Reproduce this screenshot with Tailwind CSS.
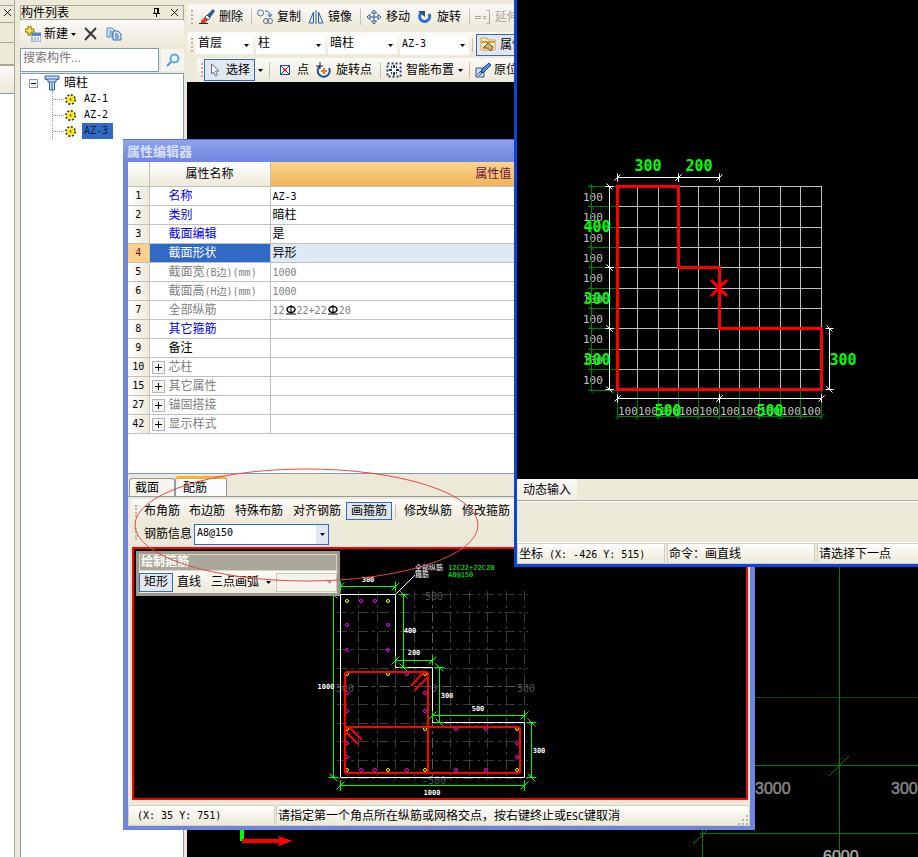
<!DOCTYPE html>
<html lang="zh-CN">
<head>
  <meta charset="UTF-8" />
  <meta name="viewport" content="width=device-width, initial-scale=1" />
  <title>属性编辑器</title>
  <script src="https://cdn.jsdelivr.net/npm/@tailwindcss/browser@4"></script>
  <style>
    body {
      font-family: 'Liberation Sans', 'Noto Sans CJK SC', sans-serif;
      font-size: 12px;
      line-height: 16px;
    }
    .mono {
      font-family: 'DejaVu Sans Mono', 'Noto Sans CJK SC', monospace;
      font-size: 10px;
    }
    td span.mono { line-height: 1; }
    button, select, label, span, footer div { white-space: nowrap; }
  </style>
</head>
<body class="relative min-h-screen overflow-hidden bg-[#ece9d8] text-black">

  <!-- Main application -->
  <div class="flex min-h-screen">

    <!-- Docked panel, mostly off screen -->
    <aside class="flex w-[15px] shrink-0 flex-col border-r border-[#aca899] pt-[5px]">
      <button class="flex h-[14px] items-center justify-center border-t border-[#aca899] bg-[#ece9d8]" aria-label="关闭">
        <svg class="size-[9px]" viewBox="0 0 9 9"><path d="M1 1l7 7M8 1l-7 7" stroke="#222" fill="none"/></svg>
      </button>
      <div class="mt-[3px] h-[21px] border-y border-[#aca899]"></div>
      <div class="h-[23px] border-b-2 border-[#aca899]"></div>
      <div class="h-[27px] bg-gradient-to-b from-[#fbfaf7] to-[#ece9d8]"></div>
      <div class="grow border-t border-[#7f9db9] bg-white"></div>
    </aside>

    <!-- Component list -->
    <aside class="ml-[5px] flex w-[164px] shrink-0 flex-col pt-[5px]">
      <header class="flex h-[15px] items-center border border-[#aca899] pr-1">
        <h2 class="grow">构件列表</h2>
        <button class="mr-[9px]" aria-label="固定">
          <svg class="size-[9px]" viewBox="0 0 9 9"><path d="M2 .5h5M2.500 .5v5M5.500 .5v5M6.500 .5v5M1 5.500h7M4.500 6v3" stroke="#000" fill="none"/></svg>
        </button>
        <button aria-label="关闭">
          <svg class="size-[9px]" viewBox="0 0 9 9"><path d="M1 1l7 7M8 1l-7 7" stroke="#222" fill="none"/></svg>
        </button>
      </header>
      <div class="flex h-[28px] items-center rounded-sm bg-gradient-to-b from-[#fbfaf7] to-[#ece9d8] pl-[5px]">
        <button class="flex items-center gap-[3px]">
          <svg class="size-4" viewBox="0 0 16 16"><path d="M3 0h3v3h3v3H6v3H3V6H0V3h3z" fill="#ffe14d" stroke="#8a6d00"/><path d="M7 7h9v9H7z" fill="#f4f8ff" stroke="#5c86c5"/><path d="M7 7h9v3H7z" fill="#5c86c5"/><path d="M9 12h2M12 12h2M9 14h2M12 14h2" stroke="#5c86c5"/></svg>
          新建
          <svg class="h-[3px] w-[5px]" viewBox="0 0 5 3"><path d="M0 0h5L2.500 3z"/></svg>
        </button>
        <button class="ml-[8px]" aria-label="删除">
          <svg class="size-[14px]" viewBox="0 0 14 14"><path d="M1 1l11 11M12 1L1 13" stroke="#3a3a3a" stroke-width="2" fill="none"/></svg>
        </button>
        <button class="ml-[8px]" aria-label="复制">
          <svg class="size-4" viewBox="0 0 16 16"><path d="M1 2h5l3 3v6H1z" fill="#dce9fb" stroke="#4f81c7"/><path d="M3 5h3M3 7h4M3 9h4" stroke="#4f81c7"/><path d="M7 5h5l3 3v6H7z" fill="#dce9fb" stroke="#3569b5"/><path d="M9 8h3M9 10h4M9 12h4" stroke="#3569b5"/></svg>
        </button>
      </div>
      <div class="flex h-[24px] items-center gap-[2px]">
        <input type="text" placeholder="搜索构件..." aria-label="搜索构件" class="h-[24px] w-[139px] border border-[#7f9db9] bg-white px-[2px] pb-1 placeholder:text-[#777]" />
        <button class="flex h-[22px] grow items-center justify-center bg-[#f5f4ee]" aria-label="搜索">
          <svg class="size-[14px]" viewBox="0 0 14 14"><circle cx="8.500" cy="5.500" r="4" fill="#eef7ff" stroke="#5ba7e6" stroke-width="2"/><path d="M5 9l-4 4" stroke="#4b93d6" stroke-width="2"/></svg>
        </button>
      </div>
      <div class="mt-px grow border border-b-0 border-[#7f9db9] bg-white pt-px pl-[8px]">
        <div class="flex h-[16px] items-center">
          <svg class="size-[9px]" viewBox="0 0 9 9"><rect x=".5" y=".5" width="8" height="8" fill="#f3f1e9" stroke="#7f9db9"/><path d="M2 4.500h5" stroke="#000"/></svg>
          <svg class="ml-[6px] size-4" viewBox="0 0 16 16"><path d="M1 1h14v3l-3 1v2h-1.500v8h-5V7H4V5L1 4z" fill="#cfe0fb" stroke="#2c5fb3"/><path d="M1 4h14M5 7h6M8 8v7" stroke="#2c5fb3"/></svg>
          <span class="ml-1">暗柱</span>
        </div>
        <ul class="ml-[23px] border-l border-dotted border-[#999]">
          <li class="flex h-[16px] items-center"><i class="w-[11px] border-t border-dotted border-[#999]"></i><svg class="ml-px size-[11px]" viewBox="0 0 11 11"><use href="#gear"/></svg><span class="mono ml-[6px] px-[2px]">AZ-1</span></li>
          <li class="flex h-[16px] items-center"><i class="w-[11px] border-t border-dotted border-[#999]"></i><svg class="ml-px size-[11px]" viewBox="0 0 11 11"><use href="#gear"/></svg><span class="mono ml-[6px] px-[2px]">AZ-2</span></li>
          <li class="flex h-[16px] items-center"><i class="w-[11px] border-t border-dotted border-[#999]"></i><svg class="ml-px size-[11px]" viewBox="0 0 11 11"><use href="#gear"/></svg><span class="mono ml-[6px] bg-[#316ac5] pr-[5px] pl-[2px] text-[#0a1a40]">AZ-3</span></li>
        </ul>
      </div>
    </aside>

    <!-- Toolbars and drawing area -->
    <main class="ml-[3px] flex min-w-0 grow flex-col overflow-hidden pt-1">
      <div class="flex h-[25px] items-center rounded-l bg-gradient-to-b from-[#fbfaf7] to-[#ece9d8] pl-1">
        <i class="mr-[3px] h-[14px] w-[2px] border-l-2 border-dotted border-[#b8b5a4]"></i>
        <button class="flex items-center gap-1 px-[3px]">
          <svg class="size-4" viewBox="0 0 16 16"><path d="M0 14.500h9" stroke="#222"/><path d="M2 12l4-4 3 3-3 3H2z" fill="#e8382c"/><path d="M6 8l3 3 2-2-3-3z" fill="#fff" stroke="#555"/><path d="M8 6l6-6 2 2-5 7z" fill="#2c5fa8"/></svg>
          删除
        </button>
        <i class="mr-[3px] ml-[5px] h-[16px] w-px bg-[#c5c2b4]"></i>
        <button class="flex items-center gap-1 px-[2px]">
          <svg class="size-4" viewBox="0 0 16 16"><g fill="none" stroke="#5a6f8e"><circle cx="3.500" cy="4" r="3"/><circle cx="9" cy="12" r="2.500"/><circle cx="13" cy="12" r="2.500"/></g><path d="M8 2c3 0 5 1 5 5M11 5l2 3 2-3" fill="none" stroke="#2a62b8"/></svg>
          复制
        </button>
        <button class="ml-[2px] flex items-center gap-1 px-[3px]">
          <svg class="size-4" viewBox="0 0 16 16"><path d="M5.500 3v11H1zM10.500 3v11H15z" fill="#e4eefc" stroke="#2c5fb3"/><path d="M8 1v14" stroke="#2c5fb3"/></svg>
          镜像
        </button>
        <i class="mr-[2px] ml-[5px] h-[16px] w-px bg-[#c5c2b4]"></i>
        <button class="flex items-center gap-1 px-[3px]">
          <svg class="size-4" viewBox="0 0 16 16"><path d="M8 1v14M1 8h14" stroke="#2b5797"/><path d="M5.500 4L8 1l2.500 3zM5.500 12L8 15l2.500-3zM4 5.500L1 8l3 2.500zM12 5.500L15 8l-3 2.500z" fill="#fff" stroke="#2b5797"/></svg>
          移动
        </button>
        <button class="ml-px flex items-center gap-1 px-[3px]">
          <svg class="size-4" viewBox="0 0 16 16"><path d="M4 4a5 5 0 1 0 8 1" fill="none" stroke="#2d6fd0" stroke-width="3"/><path d="M1 2h7v6z" fill="#1d4fa5"/></svg>
          旋转
        </button>
        <i class="mr-[2px] ml-[5px] h-[16px] w-px bg-[#c5c2b4]"></i>
        <button class="flex items-center gap-1 px-[3px] text-[#aca899]" disabled>
          <svg class="size-4" viewBox="0 0 16 16"><path d="M0 7.500h6M0 9.500h6M8 7.500h3M8 9.500h3M11.500 1.500h3v13h-3" fill="none" stroke="#aca899"/></svg>
          延伸
        </button>
      </div>

      <div class="mt-[3px] flex h-[25px] items-center gap-[3px] rounded-l bg-gradient-to-b from-[#fbfaf7] to-[#ece9d8] pl-1">
        <i class="h-[14px] w-[2px] border-l-2 border-dotted border-[#b8b5a4]"></i>
        <div class="relative w-[57px]"><select aria-label="楼层" class="h-[19px] w-full appearance-none bg-white pb-[3px] pl-[2px]"><option>首层</option></select><svg class="pointer-events-none absolute top-[9px] right-1 h-[3px] w-[5px]" viewBox="0 0 5 3"><path d="M0 0h5L2.500 3z"/></svg></div>
        <div class="relative w-[69px]"><select aria-label="构件大类" class="h-[19px] w-full appearance-none bg-white pb-[3px] pl-[2px]"><option>柱</option></select><svg class="pointer-events-none absolute top-[9px] right-1 h-[3px] w-[5px]" viewBox="0 0 5 3"><path d="M0 0h5L2.500 3z"/></svg></div>
        <div class="relative w-[69px]"><select aria-label="构件类型" class="h-[19px] w-full appearance-none bg-white pb-[3px] pl-[2px]"><option>暗柱</option></select><svg class="pointer-events-none absolute top-[9px] right-1 h-[3px] w-[5px]" viewBox="0 0 5 3"><path d="M0 0h5L2.500 3z"/></svg></div>
        <div class="relative w-[69px]"><select aria-label="构件名称" class="mono h-[19px] w-full appearance-none bg-white pb-[3px] pl-[2px]"><option>AZ-3</option></select><svg class="pointer-events-none absolute top-[9px] right-1 h-[3px] w-[5px]" viewBox="0 0 5 3"><path d="M0 0h5L2.500 3z"/></svg></div>
        <i class="h-[14px] w-px bg-[#c5c2b4]"></i>
        <button class="flex h-[22px] items-center gap-1 border border-[#316ac5] bg-[#e1e6ef] px-[3px]">
          <svg class="size-4" viewBox="0 0 16 16"><path d="M1 1h6l1 2h7v10H1z" fill="#fff3d0" stroke="#e09a3a"/><path d="M1 5h14" stroke="#e09a3a" stroke-width="2"/><path d="M3 11l5-5 5 4-2 4-4-3z" fill="#d6b45c" stroke="#665020"/></svg>
          属性
        </button>
      </div>

      <div class="mt-px ml-[10px] flex h-[24px] items-center rounded-l bg-gradient-to-b from-[#fbfaf7] to-[#ece9d8] pl-1">
        <i class="mr-px h-[14px] w-[2px] border-l-2 border-dotted border-[#b8b5a4]"></i>
        <button class="flex h-[22px] items-center gap-1 border border-[#316ac5] bg-[#e1e6ef] pr-1 pl-[1px]">
          <svg class="size-4" viewBox="0 0 16 16"><path d="M5.500 2v10l2-2 2 4 2-1-2-4H13z" fill="#fff" stroke="#5f6f88"/></svg>
          选择
        </button>
        <svg class="ml-[3px] h-[3px] w-[5px]" viewBox="0 0 5 3"><path d="M0 0h5L2.500 3z"/></svg>
        <i class="mx-[6px] h-[16px] w-px bg-[#c5c2b4]"></i>
        <button class="flex items-center gap-1 px-[1px]">
          <svg class="size-4" viewBox="0 0 16 16"><path d="M3.500 3.500h9v9h-9z" fill="#fff" stroke="#27408b"/><path d="M4 4l8 8M12 4l-8 8" stroke="#27408b"/><path d="M6.500 6.500h3v3h-3z" fill="#e22"/></svg>
          点
        </button>
        <button class="ml-[3px] flex items-center gap-1 px-[3px]">
          <svg class="size-4" viewBox="0 0 16 16"><path d="M4 4a6 6 0 1 0 9 2" fill="none" stroke="#27509b" stroke-width="2"/><path d="M0 4h7M4 0v7" stroke="#223"/><path d="M8 6v6M5 9h6" stroke="#e07b2e" stroke-width="2"/></svg>
          旋转点
        </button>
        <i class="mr-[2px] ml-[5px] h-[16px] w-px bg-[#c5c2b4]"></i>
        <button class="flex items-center gap-1 px-[3px]">
          <svg class="size-4" viewBox="0 0 16 16"><path d="M1.500 1.500h13v13h-13z" fill="#fff" stroke="#223a66" stroke-width="2" stroke-dasharray="2 2"/><path d="M8 3v3M8 10v3M3 8h3M10 8h3M5 5h1M10 5h1M5 11h1M10 11h1" stroke="#223a66" stroke-width="2"/></svg>
          智能布置
          <svg class="h-[3px] w-[5px]" viewBox="0 0 5 3"><path d="M0 0h5L2.500 3z"/></svg>
        </button>
        <i class="mr-[2px] ml-[3px] h-[16px] w-px bg-[#c5c2b4]"></i>
        <button class="flex items-center gap-[3px] px-[3px]">
          <svg class="size-4" viewBox="0 0 16 16"><path d="M1 6h8v9H1z" fill="#cfdcf0" stroke="#2b5797"/><path d="M2 13l5-5M4 14l5-5" stroke="#2b5797"/><path d="M6 11l1-4 7-6 2 2-7 7z" fill="#4f8fe0" stroke="#1b3f7a"/></svg>
          原位
        </button>
      </div>

      <div class="relative grow bg-black">
        <svg class="absolute inset-0 size-full" shape-rendering="crispEdges">
          <g transform="translate(-187 -82)">
            <path d="M755 697.500H918" stroke="#004d00"/>
            <path d="M755 765.500H918M700 833.500H918M702.500 829V857M839.500 567V857" stroke="#008000" fill="none"/>
            <path d="M829 776l20-20M693 844l18-18" stroke="#008000" shape-rendering="auto"/>
            <path d="M242 829v12" stroke="#0f0" stroke-width="4"/>
            <path d="M242 841h38" stroke="#f00" stroke-width="4"/>
            <path d="M279 836l13 5-13 5z" fill="#f00"/>
            <g font-family="Liberation Sans" font-size="16" fill="#858585" stroke="#858585" stroke-width=".5">
              <text x="755" y="794">3000</text>
              <text x="891" y="794">3000</text>
              <text x="823" y="862" fill="#ccc">6000</text>
            </g>
          </g>
        </svg>
      </div>
    </main>
  </div>

  <!-- Property editor window -->
  <section class="absolute top-[139px] left-[123px] flex w-[632px] flex-col border-x-[5px] border-b-[4px] border-[#6f84dc] bg-[#ece9d8]">
    <h2 class="-mx-[5px] h-[23px] border-t border-[#5a6fd0] bg-gradient-to-b from-[#8ea4ea] to-[#6f86de] pt-1 pl-1 font-bold text-[13px] text-[#d8e0f8]">属性编辑器</h2>

    <div class="h-[312px] border-b border-[#7f9db9] bg-white">
      <table class="w-[588px] table-fixed border-collapse">
        <colgroup><col class="w-[21px]" /><col class="w-[121px]" /><col /></colgroup>
        <thead>
          <tr class="h-[24px]">
            <th class="border-r border-b border-[#c0c0c0] bg-gradient-to-b from-white to-[#ece9d8]"></th>
            <th class="border-r border-b border-[#c0c0c0] bg-gradient-to-b from-white to-[#ece9d8] font-normal">属性名称</th>
            <th class="border-b border-[#c0c0c0] bg-gradient-to-b from-[#fbd58f] to-[#efb456] font-normal text-[#6b1040]">属性值</th>
          </tr>
        </thead>
        <tbody id="props"></tbody>
      </table>
    </div>

    <!-- Tabs -->
    <div class="flex h-[23px] items-end border-b border-[#919b9c] pl-px">
      <button class="h-[18px] w-[46px] rounded-t-sm border border-b-0 border-[#919b9c] bg-[#f6f5ef] pr-[10px]">截面</button>
      <button class="h-[20px] w-[52px] rounded-t-sm border border-t-[3px] border-b-0 border-[#919b9c] border-t-[#f5b133] bg-[#fcfcfe] pr-[12px] leading-[14px]">配筋</button>
    </div>

    <div class="mt-[2px] ml-[3px] flex h-[24px] items-center bg-gradient-to-b from-[#fbfaf7] to-[#ece9d8] pl-1">
      <i class="mr-[3px] h-[12px] w-[2px] border-l-2 border-dotted border-[#b8b5a4]"></i>
      <button class="px-[4px]">布角筋</button>
      <button class="px-[5px]">布边筋</button>
      <button class="px-[5px]">特殊布筋</button>
      <button class="px-[5px]">对齐钢筋</button>
      <button class="h-[18px] border border-[#316ac5] bg-[#e1e6ef] px-[4px] leading-none">画箍筋</button>
      <i class="mx-[3px] h-[14px] w-px bg-[#c5c2b4]"></i>
      <button class="px-[5px]">修改纵筋</button>
      <button class="px-[5px]">修改箍筋</button>
    </div>
    <div class="ml-[3px] flex h-[22px] items-center pl-1">
      <i class="mr-[7px] h-[12px] w-[2px] border-l-2 border-dotted border-[#b8b5a4]"></i>
      <label for="rebar">钢筋信息</label>
      <div class="relative ml-[2px] w-[135px]">
        <select id="rebar" class="mono h-[21px] w-full appearance-none border border-[#316ac5] bg-white pb-[3px] pl-[2px] align-top"><option>A8@150</option></select>
        <span class="pointer-events-none absolute top-[1px] right-[1px] flex h-[19px] w-[12px] items-center justify-center bg-[#e1e6ef]"><svg class="h-[3px] w-[5px]" viewBox="0 0 5 3"><path d="M0 0h5L2.500 3z"/></svg></span>
      </div>
    </div>

    <!-- Section drawing -->
    <div class="relative mt-[2px] mr-[2px] ml-[4px] h-[253px] overflow-hidden border-2 border-[#f00] bg-black">
      <svg class="h-[249px] w-[612px]" viewBox="134 549 612 249">
        <g id="section"></g>
      </svg>
      <!-- Floating stirrup toolbar -->
      <div class="absolute top-[2px] left-[2px] w-[204px] border-[3px] border-[#9d9a8c] bg-[#ece9d8]">
        <h3 class="h-[17px] border border-[#d8d5c8] bg-[#aca899] pl-[1px] leading-[15px] font-bold text-white">绘制箍筋</h3>
        <div class="flex h-[22px] items-center bg-gradient-to-b from-[#fbfaf7] to-[#ece9d8]">
          <button class="h-[19px] border border-[#316ac5] bg-[#e1e6ef] px-[4px] leading-none">矩形</button>
          <button class="px-[4px]">直线</button>
          <button class="flex items-center gap-[7px] pl-[6px]">三点画弧<svg class="h-[3px] w-[5px]" viewBox="0 0 5 3"><path d="M0 0h5L2.500 3z"/></svg></button>
          <div class="relative ml-[5px] grow">
            <select disabled aria-label="弧参数" class="h-[19px] w-full appearance-none border border-[#c9c7ba] bg-[#f5f4ea] align-top"><option></option></select>
            <svg class="absolute top-[8px] right-[5px] h-[3px] w-[5px]" viewBox="0 0 5 3"><path d="M0 0h5L2.500 3z" fill="#aca899"/></svg>
          </div>
        </div>
      </div>
    </div>

    <footer class="mt-[5px] flex h-[21px] gap-px">
      <div class="mono w-[147px] border border-[#d4d1c0] bg-gradient-to-b from-white to-[#ece9d8] pl-[8px] leading-[20px]">(X: 35 Y: 751)</div>
      <div class="relative grow border border-[#d4d1c0] bg-gradient-to-b from-white to-[#ece9d8] pl-[1px] leading-[20px]">请指定第一个角点所在纵筋或网格交点，按右键终止或<span class="mono">ESC</span>键取消
        <svg class="absolute right-px bottom-0 size-[10px]" viewBox="0 0 10 10"><path d="M8 0h2v2H8zM8 4h2v2H8zM8 8h2v2H8zM4 4h2v2H4zM4 8h2v2H4zM0 8h2v2H0z" fill="#b8b5a4"/></svg>
      </div>
    </footer>
  </section>

  <!-- Polygon editor window -->
  <section class="absolute top-0 -right-1 left-[514px] flex flex-col border-x-[3px] border-b-[3px] border-[#0a46dc] bg-[#ece9d8]">
    <div class="h-[479px] overflow-hidden bg-black">
      <svg class="h-[479px] w-[401px]" viewBox="517 0 401 479">
        <g id="polygon"></g>
      </svg>
    </div>
    <div class="flex h-[22px] border-b border-[#aca899]">
      <button class="rounded-tr bg-gradient-to-b from-[#fbfaf7] to-[#f1efe4] px-[6px]">动态输入</button>
    </div>
    <div class="h-[41px] border-t border-white"></div>
    <footer class="flex h-[22px] gap-[2px] border-t border-white">
      <div class="w-[148px] shrink-0 border border-[#d4d1c0] bg-gradient-to-b from-white to-[#ece9d8] pl-px leading-[20px]">坐标<span class="mono">&nbsp;(X: -426 Y: 515)</span></div>
      <div class="w-[148px] shrink-0 border border-[#d4d1c0] bg-gradient-to-b from-white to-[#ece9d8] pl-px leading-[20px]">命令：画直线</div>
      <div class="grow border border-[#d4d1c0] bg-gradient-to-b from-white to-[#ece9d8] pl-px leading-[20px]">请选择下一点</div>
    </footer>
  </section>

  <!-- Red highlight around the stirrup tools -->
  <svg class="pointer-events-none absolute top-[467px] left-[133px] h-[116px] w-[348px]" viewBox="133 467 348 116">
    <ellipse cx="306.500" cy="525" rx="171.500" ry="56" fill="none" stroke="#e84848"/>
  </svg>

  <svg class="hidden">
    <symbol id="gear" viewBox="0 0 11 11">
      <circle cx="5.500" cy="5.500" r="4.500" fill="none" stroke="#4a4200" stroke-width="2" stroke-dasharray="2 1.500"/>
      <circle cx="5.500" cy="5.500" r="3.500" fill="#ffee00"/>
      <circle cx="5.500" cy="5.500" r="1" fill="#4a4200"/>
    </symbol>
  </svg>

  <script>
    // Property table
    const BLUE = 'text-[#0000ff]', GRAY = 'text-[#808080]', BLACK = 'text-black';
    const phi = '<svg class="mx-px inline h-[10px] w-[10px] align-[-1px]" viewBox="0 0 10 10"><path d="M5 0v9M0 9h10" stroke="#000" fill="none"/><ellipse cx="5" cy="4.500" rx="4" ry="3" fill="none" stroke="#000" stroke-width="1.500"/></svg>';
    const rows = [
      [1, '名称', '<span class="mono">AZ-3</span>', BLUE],
      [2, '类别', '暗柱', BLUE],
      [3, '截面编辑', '是', BLUE],
      [4, '截面形状', '异形', 'text-white'],
      [5, '截面宽<span class="mono">(B边)(mm)</span>', '<span class="mono">1000</span>', GRAY],
      [6, '截面高<span class="mono">(H边)(mm)</span>', '<span class="mono">1000</span>', GRAY],
      [7, '全部纵筋', `<span class="mono">12${phi}22+22${phi}20</span>`, GRAY],
      [8, '其它箍筋', '', BLUE],
      [9, '备注', '', BLACK],
      [10, '芯柱', '', GRAY],
      [15, '其它属性', '', GRAY],
      [27, '锚固搭接', '', GRAY],
      [42, '显示样式', '', GRAY],
    ];
    const plus = '<svg class="absolute top-[3px] left-[2px] size-[13px]" viewBox="0 0 13 13"><rect x=".5" y=".5" width="12" height="12" fill="#f6f5ef" stroke="#b5b5b5"/><path d="M3 6.500h7M6.500 3v7" stroke="#000"/></svg>';
    document.getElementById('props').innerHTML = rows.map(([n, name, value, color]) => {
      const on = n === 4;
      return `<tr class="h-[19px] leading-[18px]">
        <td class="mono border-r border-b border-[#c0c0c0] text-center ${on ? 'bg-[#fdd08a] text-[#6b1040]' : 'bg-gradient-to-r from-white to-[#ece9d8]'}">${n}</td>
        <td class="relative border-r border-b border-[#c0c0c0] pl-[19px] ${color} ${on ? 'bg-[#316ac5]' : ''}">${n > 9 ? plus : ''}${name}</td>
        <td class="border-b border-[#c0c0c0] pl-[2px] ${on ? 'bg-[#dfe8f5]' : ''} ${color === GRAY ? GRAY : BLACK}">${value}</td>
      </tr>`;
    }).join('');

    const line = (x1, y1, x2, y2, c, w = 1, extra = '') =>
      `<path d="M${x1} ${y1}L${x2} ${y2}" stroke="${c}" stroke-width="${w}" fill="none" ${extra}/>`;
    const label = (x, y, s, size, c, extra = '') =>
      `<text x="${x}" y="${y}" text-anchor="middle" dominant-baseline="central" font-family="DejaVu Sans Mono" font-size="${size}" fill="${c}" ${extra}>${s}</text>`;
    // Dimension line with slashed ends
    const dim = (x1, y1, x2, y2, c, r) => {
      let s = line(x1, y1, x2, y2, c);
      const h = y1 === y2;
      for (const [x, y] of [[x1, y1], [x2, y2]]) {
        s += h ? line(x, y - r, x, y + r, c) + line(x - r + 1, y + r - 1, x + r - 1, y - r + 1, c)
               : line(x - r, y, x + r, y, c) + line(x - r + 1, y - r + 1, x + r - 1, y + r - 1, c);
      }
      return s;
    };

    // Section with bars
    let s = '';
    for (let i = 0; i <= 10; i++) {
      const p = Math.round(i * 18.4);
      const c = i === 5 ? '#5a5a5a' : '#3a3a3a';
      s += line(340.5 + p, 591, 340.5 + p, 781, c, 1, 'stroke-dasharray="10 4 3 4"');
      s += line(337, 594.5 + p, 528, 594.5 + p, c, 1, 'stroke-dasharray="10 4 3 4"');
    }
    s += label(434, 596, '500', 10, '#555') + label(345, 688, '500', 10, '#555') + label(434, 688, '0', 10, '#555')
       + label(526, 688, '500', 10, '#555') + label(434, 780, '-500', 10, '#555');
    s += '<path d="M340.500 594.500H395.500V667.500H432.500V722.500H524.500V777.500H340.500z" fill="none" stroke="#fff"/>';
    s += dim(340.5, 586.5, 395.5, 586.5, '#0f0', 5) + dim(403.5, 594.5, 403.5, 667.5, '#0f0', 5)
       + dim(395.5, 660.5, 432.5, 660.5, '#0f0', 5) + dim(439.5, 667.5, 439.5, 722.5, '#0f0', 5)
       + dim(432.5, 715.5, 524.5, 715.5, '#0f0', 5) + dim(531.5, 722.5, 531.5, 777.5, '#0f0', 5)
       + dim(340.5, 785.5, 524.5, 785.5, '#0f0', 5) + dim(333.5, 594.5, 333.5, 777.5, '#0f0', 5);
    const yellow = [[347,601],[388,601],[347,674],[388,674],[425,674],[347,729],[425,729],[517,729],[347,770],[388,770],[425,770],[517,770]];
    const pink = [[361,601],[375,601],[347,625],[388,625],[347,650],[388,650],[407,674],[347,693],[347,711],[425,693],[425,711],[456,729],[486,729],[347,743],[347,757],[517,743],[517,757],[361,770],[375,770],[407,770],[456,770],[486,770]];
    for (const [x, y] of yellow) s += `<circle cx="${x}" cy="${y}" r="1.500" fill="none" stroke="#ff0"/>`;
    for (const [x, y] of pink) s += `<circle cx="${x}" cy="${y}" r="1.500" fill="none" stroke="#f0f"/>`;
    s += '<g fill="none" stroke="#f00" stroke-width="2"><rect x="345" y="672" width="83" height="101" rx="2"/><rect x="345" y="727" width="175" height="46" rx="2"/><path d="M411 686l13-14M415 690l13-13M345 731l13 13M349 727l13 13"/></g>';
    s += line(396, 594, 415, 575, '#fff');
    for (const [x, y, t] of [[368,580,300],[410,631,400],[414,653,200],[447,696,300],[478,709,500],[539,751,300],[432,793,1000],[326,687,1000]])
      s += label(x, y, t, 7, '#fff', 'font-weight="bold"');
    s += '<g font-family="DejaVu Sans Mono, Noto Sans CJK SC" font-size="7"><g fill="#fff"><text x="415" y="570">全部纵筋</text><text x="415" y="577">箍筋</text></g><g fill="#0f0"><text x="448" y="570">12C22+22C20</text><text x="448" y="577">A8@150</text></g></g>';
    document.getElementById('section').innerHTML = s;

    // Polygon outline over the 100 mm grid
    let p = '';
    for (let i = 0; i <= 10; i++) {
      const d = Math.round(i * 20.35) + .5;
      p += line(617 + d, 186, 617 + d, 390, '#c0c0c0') + line(617, 186 + d, 822, 186 + d, '#c0c0c0');
      p += line(588, 186 + d, 617, 186 + d, '#008000') + line(589, 184 + d, 594, 189 + d, '#008000');
      p += line(617 + d, 390, 617 + d, 419, '#008000') + line(615 + d, 419, 620 + d, 414, '#008000');
      if (i < 10) {
        p += `<text x="583" y="${201 + Math.round(i * 20.35)}" font-family="DejaVu Sans Mono" font-size="11" fill="#c0c0c0">100</text>`;
        p += `<text x="${618 + Math.round(i * 20.35)}" y="415" font-family="DejaVu Sans Mono" font-size="11" fill="#c0c0c0">100</text>`;
      }
    }
    p += line(591.5, 184, 591.5, 390, '#008000') + line(617, 416.5, 822, 416.5, '#008000');
    p += dim(617.5, 177.5, 678.5, 177.5, '#fff', 4) + dim(678.5, 177.5, 719.5, 177.5, '#fff', 4);
    p += dim(609.5, 186.5, 609.5, 267.5, '#fff', 4) + dim(609.5, 267.5, 609.5, 328.5, '#fff', 4) + dim(609.5, 328.5, 609.5, 389.5, '#fff', 4);
    p += dim(617.5, 398.5, 719.5, 398.5, '#fff', 4) + dim(719.5, 398.5, 821.5, 398.5, '#fff', 4) + dim(829.5, 328.5, 829.5, 389.5, '#fff', 4);
    p += '<path d="M617.500 186.500H678.500V267.500H719.500V328.500H821.500V389.500H617.500zM711 280l16 16M727 280l-16 16" fill="none" stroke="#f00" stroke-width="3"/>';
    for (const [x, y, t] of [[648,166,300],[699,166,200],[597,227,400],[597,299,300],[597,360,300],[843,360,300],[668,411,500],[770,411,500]])
      p += label(x, y, t, 15, '#0f0', 'font-weight="bold"');
    document.getElementById('polygon').innerHTML = p;
  </script>
</body>
</html>
